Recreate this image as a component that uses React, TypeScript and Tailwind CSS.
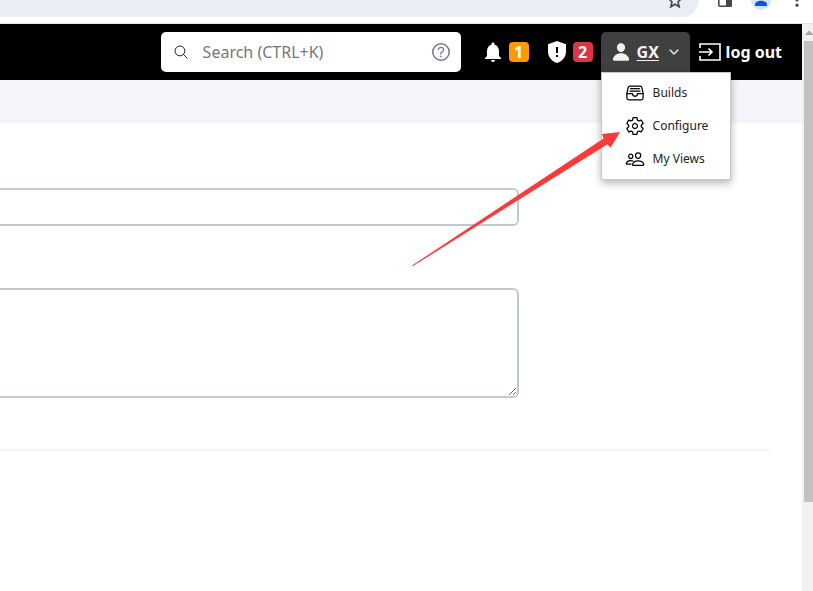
import React from "react";
import {
  IoSearchOutline,
  IoHelpCircleOutline,
  IoPerson,
  IoFileTrayFullOutline,
  IoSettingsOutline,
  IoPeopleOutline,
  IoChevronDown,
} from "react-icons/io5";
import { MdNotifications } from "react-icons/md";

function BrowserBar() {
  return (
    <div className="flex h-6 items-start border-b border-[#e4e4e4] bg-white">
      <div className="flex h-[17px] flex-1 justify-end overflow-hidden rounded-br-[17px] bg-[#e9edf6] pr-4">
        <button aria-label="Bookmark" className="h-2 w-4">
          <svg viewBox="0 0 16 8" className="h-2 w-4" fill="none" stroke="#474747" strokeWidth="1.6">
            <path d="M2 -1 L5 2 L3.8 6.800 L8 4.200 L12.2 6.800 L11 2 L14 -1" />
          </svg>
        </button>
      </div>
      <div className="flex w-[114px] shrink-0 items-start pl-[18px]">
        <button aria-label="Side panel" className="h-2 w-4">
          <svg viewBox="0 0 16 8" className="h-2 w-4">
            <path d="M1.8 0V5.2q0 1 1 1H13.2q1 0 1-1V0" fill="none" stroke="#474747" strokeWidth="1.6" />
            <path d="M9 0h6v6.5h-6z" fill="#474747" />
          </svg>
        </button>
        <button aria-label="Profile" className="ml-[18px] h-[11px] w-5">
          <svg viewBox="0 0 20 11" className="h-[11px] w-5">
            <circle cx="10" cy="0" r="10" fill="#d3e3fd" />
            <path d="M4 6V4.4C4 2 7 .7 10 .7s6 1.300 6 3.700V6z" fill="#0b57d0" />
          </svg>
        </button>
        <button aria-label="Browser menu" className="ml-[18px] h-2 w-4">
          <svg viewBox="0 0 16 8" className="h-2 w-4" fill="#474747">
            <circle cx="8" cy="0" r="1.600" />
            <circle cx="8" cy="5.200" r="1.600" />
          </svg>
        </button>
      </div>
    </div>
  );
}

const menuItems = [
  { label: "Builds", Icon: IoFileTrayFullOutline },
  { label: "Configure", Icon: IoSettingsOutline },
  { label: "My Views", Icon: IoPeopleOutline },
];

function UserMenu() {
  return (
    <div className="relative">
      <button className="flex h-10 w-[89px] items-center rounded-t-[5px] bg-[#404040] pl-[10px] text-base font-bold text-[#f2f2f2]">
        <IoPerson className="size-5" />
        <span className="ml-[6px] underline decoration-1 underline-offset-2">GX</span>
        <IoChevronDown className="ml-2 size-[14px]" />
      </button>
      <ul className="absolute top-10 left-0 z-10 w-[130px] border border-[#bfcbd0] bg-white pt-[3px] pb-1 shadow-[0_3px_8px_rgba(0,0,0,0.3)]">
        {menuItems.map(({ label, Icon }) => (
          <li key={label}>
            <a href="#" className="flex h-[33px] items-center gap-2 pl-[23px] text-xs text-[#222]">
              <Icon className="size-5 text-black" />
              {label}
            </a>
          </li>
        ))}
      </ul>
    </div>
  );
}

function Header() {
  return (
    <header className="flex h-14 items-center justify-end bg-black pr-5 text-white">
      <label className="flex h-10 w-[300px] items-center rounded-[5px] bg-white px-3">
        <IoSearchOutline className="size-4 shrink-0 stroke-[8] text-[#222]" />
        <input
          aria-label="Search"
          placeholder="Search (CTRL+K)"
          className="ml-[14px] min-w-0 flex-1 text-base text-[#333] outline-none placeholder:text-[#777]"
        />
        <IoHelpCircleOutline className="-mr-1 size-6 shrink-0 text-[#73739b]" />
      </label>
      <a href="#" aria-label="Notifications: 1" className="ml-5 flex items-center gap-1">
        <MdNotifications className="size-6" />
        <span className="flex h-5 w-5 items-center justify-center rounded bg-[#fe9a00] text-base font-bold">1</span>
      </a>
      <a href="#" aria-label="Security warnings: 2" className="ml-[18px] flex items-center gap-[6px]">
        <svg viewBox="0 0 20 24" className="h-6 w-5">
          <path d="M10 1 L19 4.300 V11 C19 17 15.500 21 10 23 C4.500 21 1 17 1 11 V4.300 Z" fill="white" />
          <path d="M9 7h2v6H9zM9 15h2v2H9z" fill="black" />
        </svg>
        <span className="flex h-5 w-5 items-center justify-center rounded bg-[#dc3545] text-base font-bold">2</span>
      </a>
      <div className="ml-2">
        <UserMenu />
      </div>
      <a href="#" className="ml-2 flex items-center gap-1 text-base font-bold">
        <svg viewBox="0 0 24 20" className="h-5 w-6" fill="none" stroke="white" strokeWidth="1.600">
          <path d="M2 6V2H22V18H2V14" />
          <path d="M1 10H14M10.500 6.500L14 10L10.500 13.500" />
        </svg>
        log out
      </a>
    </header>
  );
}

function Pointer() {
  return (
    <svg
      viewBox="0 0 208 134"
      className="pointer-events-none absolute top-[132px] left-[412px] z-20 h-[134px] w-[208px]"
      fill="#fd3a39"
    >
      <path d="M0 133.500 L191.500 6.500 L190 2 L208 0 L198.500 15.700 L195.500 12.300 L1 134 Z" />
    </svg>
  );
}

export default function App() {
  return (
    <div className="relative flex min-h-screen flex-col overflow-hidden bg-white font-['Noto_Sans','Open_Sans',sans-serif]">
      <BrowserBar />
      <div className="flex flex-1">
        <main className="min-w-0 flex-1">
          <Header />
          <div className="h-[43px] bg-[#f4f4f9]" />
          <form className="pt-[65px]">
            <input
              aria-label="Full name"
              className="block h-[38px] w-full max-w-[519px] rounded-r-md border-2 border-l-0 border-[#bfcbd0] px-2 outline-none"
            />
            <textarea
              aria-label="Description"
              className="mt-[62px] block h-[110px] w-full max-w-[519px] resize-y rounded-r-md border-2 border-l-0 border-[#bfcbd0] px-2 outline-none"
            />
            <hr className="mt-[51px] mr-8 border-t-2 border-[#f3f3f8]" />
          </form>
        </main>
        <div className="flex w-[11px] shrink-0 flex-col items-end bg-[#f1f1f1]">
          <svg viewBox="0 0 9 17" className="h-[17px] w-[9px]" fill="#a3a3a3">
            <path d="M1 11 L5 6.500 L9 10.500 V11 Z" />
          </svg>
          <div className="h-[461px] w-[9px] bg-[#c1c1c1]" />
        </div>
      </div>
      <Pointer />
    </div>
  );
}
